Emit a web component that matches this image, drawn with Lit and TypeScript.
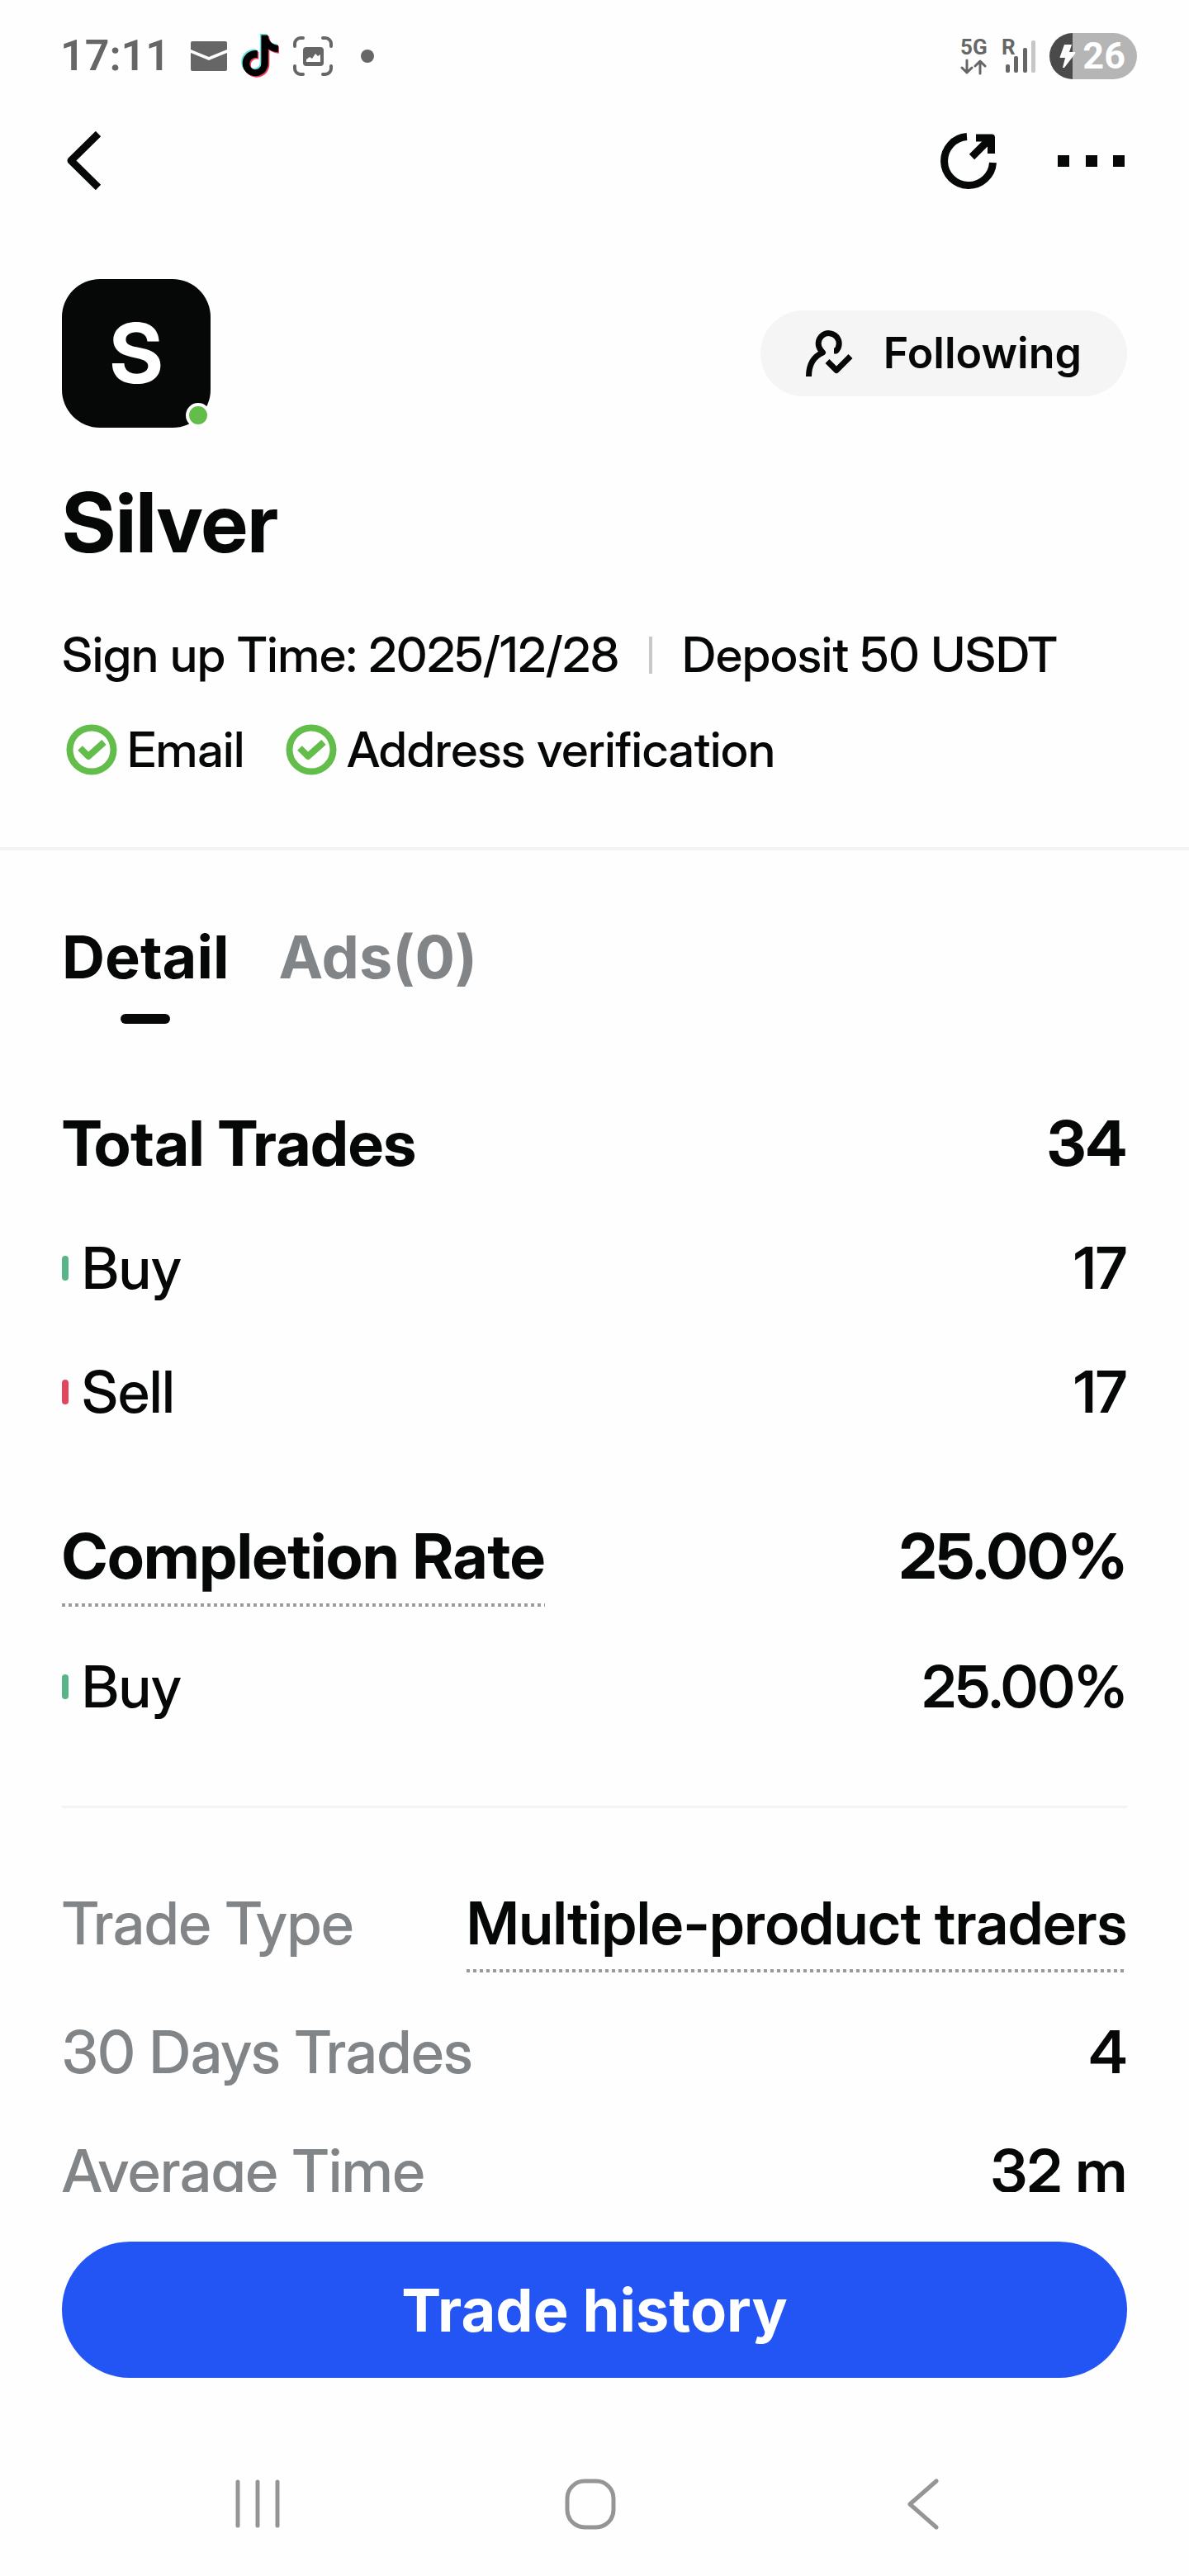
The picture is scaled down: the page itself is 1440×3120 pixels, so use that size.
import { LitElement, html, css, svg, nothing } from "lit";
import { customElement, property, state } from "lit/decorators.js";
import { classMap } from "lit/directives/class-map.js";

const NOTE_PATH =
  "M12.525.02c1.31-.02 2.61-.01 3.91-.02.08 1.53.63 3.09 1.75 4.17 1.12 1.11 2.7 1.62 4.24 1.79v4.03c-1.44-.05-2.89-.35-4.2-.97-.57-.26-1.1-.59-1.62-.93-.01 2.92.01 5.84-.02 8.75-.08 1.4-.54 2.79-1.35 3.94-1.31 1.92-3.58 3.17-5.91 3.21-1.43.08-2.86-.31-4.08-1.03-2.02-1.19-3.44-3.37-3.65-5.71-.02-.5-.03-1-.01-1.49.18-1.9 1.12-3.72 2.58-4.96 1.66-1.44 3.98-2.13 6.15-1.72.02 1.48-.04 2.96-.04 4.44-.99-.32-2.15-.23-3.02.37-.63.41-1.11 1.04-1.36 1.75-.21.51-.15 1.07-.14 1.61.24 1.64 1.82 3.02 3.5 2.87 1.12-.01 2.19-.66 2.77-1.61.19-.33.4-.67.41-1.06.1-1.79.06-3.57.07-5.36.01-4.03-.01-8.05.02-12.07z";

interface Stat {
  label: string;
  value: string;
  mark?: "buy" | "sell";
}

@customElement("status-bar")
class StatusBar extends LitElement {
  static styles = css`
    :host {
      display: flex;
      align-items: center;
      justify-content: space-between;
      padding: 40px 63px 0 73px;
      font-family: Roboto, sans-serif;
      color: #666;
    }
    .side {
      display: flex;
      align-items: center;
    }
    .clock {
      font-size: 52px;
      font-weight: 600;
      line-height: 56px;
    }
    .icons {
      display: flex;
      align-items: center;
      gap: 17px;
      margin-left: 25px;
    }
    .dot {
      width: 16px;
      height: 16px;
      margin-left: 17px;
      border-radius: 50%;
      background: #666;
    }
    .signals {
      margin-right: 16px;
    }
    .battery {
      display: flex;
      align-items: center;
      gap: 8px;
      padding: 0 14px 0 12px;
      border-radius: 28px;
      background: linear-gradient(to right, #4a4a4a 26%, #b5b5b5 26%);
      color: #fff;
      font-size: 45px;
      font-weight: 700;
      line-height: 56px;
    }
    svg {
      display: block;
    }
  `;
  render() {
    return html`
      <div class="side">
        <span class="clock">17:11</span>
        <div class="icons">
          <svg width="44" height="36" viewBox="0 0 44 36" fill="#666" aria-hidden="true">
            <path d="M2 0H42a2 2 0 0 1 2 2V10L22 19 0 10V2a2 2 0 0 1 2-2z" />
            <path d="M0 14L22 23 44 14V34a2 2 0 0 1-2 2H2a2 2 0 0 1-2-2z" />
          </svg>
          <svg width="46" height="54" viewBox="0 0 46 54" aria-hidden="true">
            <path fill="#63e0dc" transform="translate(-3 0) scale(2.07)" d=${NOTE_PATH} />
            <path fill="#e5405f" transform="translate(0 3) scale(2.07)" d=${NOTE_PATH} />
            <path fill="#000" transform="translate(-1.500 1.500) scale(2.07)" d=${NOTE_PATH} />
          </svg>
          <svg width="48" height="48" viewBox="0 0 48 48" aria-hidden="true">
            <path
              d="M2 12V9a7 7 0 0 1 7-7H12M36 2h3a7 7 0 0 1 7 7v3M46 36v3a7 7 0 0 1-7 7H36M12 46H9a7 7 0 0 1-7-7V36"
              fill="none" stroke="#666" stroke-width="4" stroke-linecap="round" />
            <rect x="12" y="13" width="25" height="23" rx="4" fill="#666" />
            <path d="M16 31V28L20 25 23 27 27 21 30 24 33 22V31z" fill="#fff" />
          </svg>
          <span class="dot"></span>
        </div>
      </div>
      <div class="side">
        <svg class="signals" width="92" height="56" viewBox="0 0 92 56" role="img" aria-label="5G signal">
          <g fill="#666" font-family="Roboto, sans-serif" font-weight="700" font-size="26">
            <text x="0" y="26">5G</text>
            <text x="50" y="26">R</text>
          </g>
          <path
            d="M8 33V48M2 42L8 48 14 42M24 49V34M18 40L24 34 30 40"
            fill="none" stroke="#666" stroke-width="3" stroke-linecap="round" stroke-linejoin="round" />
          <g fill="#666">
            <rect x="55" y="38" width="5" height="10" rx="2" />
            <rect x="65" y="28" width="5" height="20" rx="2" />
            <rect x="76" y="18" width="5" height="30" rx="2" />
            <rect x="86" y="9" width="5" height="39" rx="2" fill="#c6c6c6" />
          </g>
        </svg>
        <span class="battery">
          <svg width="20" height="30" viewBox="0 0 20 30" fill="#fff" aria-hidden="true">
            <path d="M6 1H15L12 10H19Q20 11 19 12L6 29H4L7 17H1Q0 16 1 15z" />
          </svg>
          <span>26</span>
        </span>
      </div>
    `;
  }
}

@customElement("stat-row")
class StatRow extends LitElement {
  @property({ attribute: false }) stat!: Stat;
  @property() level: "head" | "item" | "info" = "item";
  @property() underline: "" | "label" | "value" = "";

  static styles = css`
    :host {
      display: block;
      color: #060807;
    }
    .row {
      display: flex;
      align-items: flex-start;
      justify-content: space-between;
      line-height: 96px;
      font-size: 70px;
    }
    .label {
      display: flex;
      align-items: center;
      gap: 16px;
      font-weight: 500;
    }
    .value {
      font-weight: 600;
    }
    .head {
      font-size: 76px;
      line-height: 100px;
    }
    .head .label,
    .head .value {
      font-weight: 700;
    }
    .info {
      font-size: 72px;
    }
    .info .label {
      color: #828587;
    }
    .mark {
      width: 8px;
      height: 30px;
      border-radius: 4px;
    }
    .buy {
      background: #58b587;
    }
    .sell {
      background: #e0475e;
    }
    .dotted {
      padding-bottom: 12px;
      background: repeating-linear-gradient(to right, #9a9a9a 0 4px, transparent 4px 8px) left bottom / 100% 4px no-repeat;
    }
  `;
  render() {
    const { label, value, mark } = this.stat;
    return html`
      <div class="row ${this.level}">
        <span class=${classMap({ label: true, dotted: this.underline === "label" })}>
          ${mark ? html`<i class="mark ${mark}"></i>` : nothing}${label}
        </span>
        <span class=${classMap({ value: true, dotted: this.underline === "value" })}>${value}</span>
      </div>
    `;
  }
}

const check = svg`
  <circle cx="31" cy="31" r="26.500" fill="none" stroke="#62bd4b" stroke-width="8" />
  <path d="M17 29L27 39 46 22" fill="none" stroke="#62bd4b" stroke-width="8" stroke-linejoin="round" />
`;

@customElement("app-root")
class AppRoot extends LitElement {
  @state() private tab = "Detail";

  static styles = css`
    :host {
      display: flex;
      flex-direction: column;
      height: 100vh;
      background: #fefefe;
      color: #060807;
      font-family: "Inter Display", Inter, "Liberation Sans", sans-serif;
    }
    button {
      margin: 0;
      padding: 0;
      border: 0;
      background: none;
      color: inherit;
      font: inherit;
      cursor: pointer;
    }
    svg {
      display: block;
    }
    .topbar {
      display: flex;
      align-items: center;
      justify-content: space-between;
      padding: 63px 75px 0;
    }
    .actions {
      display: flex;
      align-items: center;
      gap: 72px;
    }
    .scroll {
      flex: 1;
      min-height: 0;
      overflow-y: auto;
      scrollbar-width: none;
    }
    .profile {
      padding: 108px 75px 82px;
      border-bottom: 4px solid #f3f3f3;
    }
    .identity {
      display: flex;
      align-items: center;
      justify-content: space-between;
    }
    .avatar {
      position: relative;
      width: 180px;
      border-radius: 46px;
      background: #060807;
      color: #fff;
      font-size: 100px;
      font-weight: 700;
      line-height: 180px;
      text-align: center;
    }
    .online {
      position: absolute;
      right: 0;
      bottom: 0;
      width: 22px;
      height: 22px;
      border: 4px solid #fff;
      border-radius: 50%;
      background: #62bd4b;
    }
    .follow {
      display: flex;
      align-items: center;
      gap: 37px;
      padding: 0 55px;
      border-radius: 52px;
      background: #f5f5f5;
      font-family: Inter, "Liberation Sans", sans-serif;
      font-size: 52px;
      font-weight: 600;
      line-height: 104px;
    }
    h1 {
      margin: 55px 0 64px;
      font-size: 100px;
      font-weight: 700;
      line-height: 120px;
    }
    .facts,
    .badges,
    .badge {
      display: flex;
      align-items: center;
    }
    .facts,
    .badges {
      font-size: 59px;
      font-weight: 500;
      line-height: 72px;
    }
    .facts {
      gap: 36px;
      margin-bottom: 43px;
    }
    .bar {
      width: 4px;
      height: 45px;
      background: #c8c8c8;
    }
    .badges {
      gap: 50px;
      padding-left: 5px;
    }
    .badge {
      gap: 12px;
    }
    .tabs {
      display: flex;
      gap: 60px;
      padding: 85px 75px 0;
      font-family: Inter, "Liberation Sans", sans-serif;
      font-size: 72px;
      font-weight: 700;
      line-height: 88px;
    }
    .tab {
      display: flex;
      flex-direction: column;
      align-items: center;
      gap: 25px;
      color: #828587;
    }
    .tab::after {
      content: "";
      width: 60px;
      height: 12px;
      border-radius: 6px;
    }
    .active {
      color: #060807;
    }
    .active::after {
      background: #060807;
    }
    .stats {
      display: flex;
      flex-direction: column;
      gap: 54px;
      padding: 94px 75px 0;
    }
    .rate {
      gap: 49px;
      padding-top: 100px;
    }
    .about {
      gap: 48px;
      margin: 96px 75px 0;
      padding: 91px 0 48px;
      border-top: 3px solid #f3f3f3;
    }
    footer {
      padding: 60px 75px 122px;
    }
    .history {
      width: 100%;
      border-radius: 83px;
      background: #2355f5;
      color: #fff;
      font-family: Inter, "Liberation Sans", sans-serif;
      font-size: 72px;
      font-weight: 700;
      line-height: 165px;
    }
    .system {
      display: flex;
      justify-content: space-around;
      padding: 0 122px 56px 112px;
    }
    .system svg {
      stroke: #959595;
      stroke-width: 5;
      stroke-linecap: round;
      stroke-linejoin: round;
      fill: none;
    }
  `;

  private renderTab(name: string, text: string) {
    const on = this.tab === name;
    return html`<button
      class=${classMap({ tab: true, active: on })}
      role="tab"
      aria-selected=${on ? "true" : "false"}
      @click=${() => (this.tab = name)}
    >${text}</button>`;
  }

  render() {
    return html`
      <status-bar></status-bar>
      <header class="topbar">
        <button aria-label="Back">
          <svg width="50" height="71" viewBox="0 0 50 71" aria-hidden="true">
            <path d="M44 3L11 35.500 44 68" fill="none" stroke="#060807" stroke-width="9" stroke-linejoin="round" />
          </svg>
        </button>
        <div class="actions">
          <button aria-label="Share">
            <svg width="70" height="71" viewBox="0 0 70 71" fill="none" stroke="#060807" aria-hidden="true">
              <path d="M32 6.600A29.500 29.500 0 1 0 63.500 38M38 31L60 9" stroke-width="9" />
              <path d="M43 3.500H62a4 4 0 0 1 4 4V27H57V12.500H43z" fill="#060807" stroke="none" />
            </svg>
          </button>
          <button aria-label="More">
            <svg width="84" height="14" viewBox="0 0 84 14" fill="#060807" aria-hidden="true">
              <path d="M0 0h14v14H0zM34 0h14v14H34zM67 0h14v14H67z" />
            </svg>
          </button>
        </div>
      </header>

      <main class="scroll">
        <section class="profile">
          <div class="identity">
            <div class="avatar">S<span class="online"></span></div>
            <button class="follow">
              <svg width="57" height="57" viewBox="0 0 57 57" fill="none" stroke="#060807" stroke-width="7" aria-hidden="true">
                <path d="M34 25H36.500A12.500 12.500 0 1 0 18 24L20.500 27C10 31.500 3.500 41 3.500 56" stroke-linejoin="round" />
                <path d="M26 37.500L37 48.500 54 31.500" stroke-linejoin="round" />
              </svg>
              Following
            </button>
          </div>
          <h1>Silver</h1>
          <div class="facts">
            <span>Sign up Time: 2025/12/28</span>
            <span class="bar"></span>
            <span>Deposit 50 USDT</span>
          </div>
          <div class="badges">
            ${["Email", "Address verification"].map(
              (name) => html`<span class="badge">
                <svg width="62" height="62" viewBox="0 0 62 62" aria-hidden="true">${check}</svg>${name}
              </span>`
            )}
          </div>
        </section>

        <div class="tabs" role="tablist">
          ${this.renderTab("Detail", "Detail")} ${this.renderTab("Ads", "Ads(0)")}
        </div>

        <section class="stats">
          <stat-row level="head" .stat=${{ label: "Total Trades", value: "34" }}></stat-row>
          <stat-row .stat=${{ label: "Buy", value: "17", mark: "buy" }}></stat-row>
          <stat-row .stat=${{ label: "Sell", value: "17", mark: "sell" }}></stat-row>
        </section>
        <section class="stats rate">
          <stat-row level="head" underline="label" .stat=${{ label: "Completion Rate", value: "25.00%" }}></stat-row>
          <stat-row .stat=${{ label: "Buy", value: "25.00%", mark: "buy" }}></stat-row>
        </section>
        <section class="stats about">
          <stat-row level="info" underline="value" .stat=${{ label: "Trade Type", value: "Multiple-product traders" }}></stat-row>
          <stat-row level="info" .stat=${{ label: "30 Days Trades", value: "4" }}></stat-row>
          <stat-row level="info" .stat=${{ label: "Average Time", value: "32 m" }}></stat-row>
        </section>
      </main>

      <footer>
        <button class="history">Trade history</button>
      </footer>
      <nav class="system">
        <button aria-label="Recent apps">
          <svg width="62" height="62" viewBox="0 0 62 62" aria-hidden="true">
            <path d="M6 4V57M30 4V57M54 4V57" />
          </svg>
        </button>
        <button aria-label="Home">
          <svg width="62" height="62" viewBox="0 0 62 62" aria-hidden="true">
            <rect x="3" y="3" width="56" height="56" rx="21" />
          </svg>
        </button>
        <button aria-label="System back">
          <svg width="62" height="62" viewBox="0 0 62 62" aria-hidden="true">
            <path d="M48 3L16 31 48 59" />
          </svg>
        </button>
      </nav>
    `;
  }
}
